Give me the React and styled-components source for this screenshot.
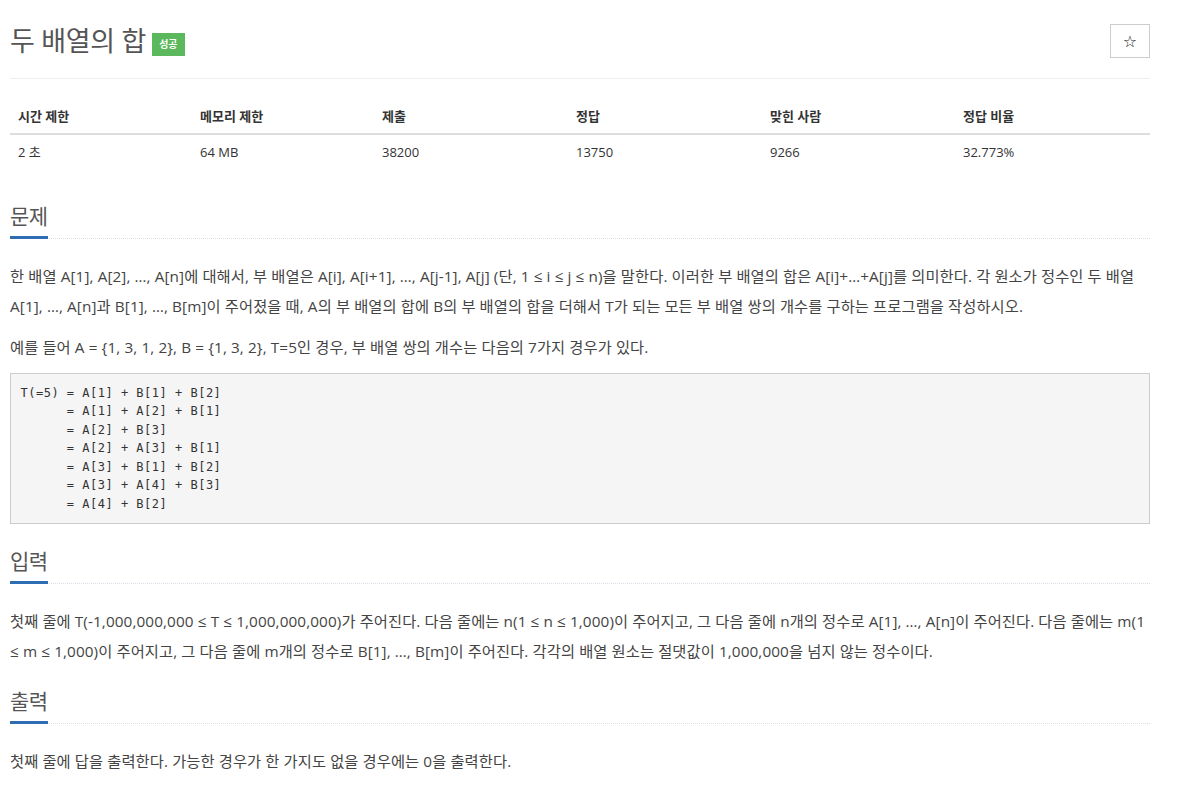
import React from "react";
import styled, { createGlobalStyle } from "styled-components";

const Global = createGlobalStyle`
  html, body { margin: 0; padding: 0; background: #fff; }
  body {
    font-family: "Open Sans", "Noto Sans CJK KR", sans-serif;
    color: #555;
  }
  * { box-sizing: border-box; }
`;

const Page = styled.div`
  width: 1140px;
  margin-left: 10px;
  padding-top: 24px;
`;

const Header = styled.div`
  display: flex;
  align-items: flex-start;
  justify-content: space-between;
  border-bottom: 1px solid #eee;
  padding-bottom: 20px;
  margin-bottom: 20px;
`;

const Title = styled.h1`
  margin: 2px 0 0;
  font-size: 27px;
  font-weight: 400;
  line-height: 30px;
  color: #555;
  letter-spacing: -0.3px;
  display: flex;
  align-items: center;
  gap: 6px;
`;

const Badge = styled.span`
  display: inline-block;
  background: #5cb85c;
  color: #fff;
  font-size: 10px;
  font-weight: 700;
  line-height: 23px;
  height: 23px;
  padding: 0 7px;
  margin-top: 6px;
  letter-spacing: 0;
`;

const StarButton = styled.button`
  width: 40px;
  height: 34px;
  background: #fff;
  border: 1px solid #ccc;
  color: #222;
  font-size: 16px;
  padding: 0;
  cursor: pointer;
  font-family: "DejaVu Sans", sans-serif;
`;

const Table = styled.table`
  width: 100%;
  border-collapse: collapse;
  font-size: 13px;
  margin-bottom: 23px;
  color: #333;
`;

const Th = styled.th`
  text-align: left;
  font-weight: 700;
  padding: 8px;
  line-height: 18px;
  border-bottom: 2px solid #ddd;
`;

const Td = styled.td`
  padding: 8px;
  line-height: 18px;
`;

const Section = styled.section`
  display: flow-root;
`;

const Headline = styled.div`
  border-bottom: 1px dotted #d8dee6;
  margin: 10px 0 22px;
`;

const H2 = styled.h2`
  display: inline-block;
  margin: 0 0 -1px;
  padding-bottom: 6px;
  font-size: 21px;
  font-weight: 400;
  line-height: 28px;
  color: #555;
  letter-spacing: -0.5px;
  border-bottom: 3px solid #2e6db4;
`;

const Para = styled.p`
  margin: 0 0 11px;
  font-size: 15.3px;
  line-height: 30px;
  color: #444;
  letter-spacing: 0.1px;
`;

const Pre = styled.pre`
  margin: 0 0 13px;
  padding: 9.5px;
  background: #f5f5f5;
  border: 1px solid #ccc;
  font-family: "DejaVu Sans Mono", monospace;
  font-size: 12px;
  line-height: 18.57px;
  color: #333;
  letter-spacing: 0.5px;
`;

const cols = [182, 182, 194, 194, 193, 195];
const heads = ["시간 제한", "메모리 제한", "제출", "정답", "맞힌 사람", "정답 비율"];
const vals = ["2 초", "64 MB", "38200", "13750", "9266", "32.773%"];

const code = `T(=5) = A[1] + B[1] + B[2]
      = A[1] + A[2] + B[1]
      = A[2] + B[3]
      = A[2] + A[3] + B[1]
      = A[3] + B[1] + B[2]
      = A[3] + A[4] + B[3]
      = A[4] + B[2]`;

export default function App() {
  return (
    <>
      <Global />
      <Page>
        <Header>
          <Title>
            두 배열의 합 <Badge>성공</Badge>
          </Title>
          <StarButton>☆</StarButton>
        </Header>
        <Table>
          <colgroup>
            {cols.map((w, i) => (
              <col key={i} style={{ width: w }} />
            ))}
          </colgroup>
          <thead>
            <tr>
              {heads.map((h) => (
                <Th key={h}>{h}</Th>
              ))}
            </tr>
          </thead>
          <tbody>
            <tr>
              {vals.map((v) => (
                <Td key={v}>{v}</Td>
              ))}
            </tr>
          </tbody>
        </Table>
        <Section>
          <Headline>
            <H2>문제</H2>
          </Headline>
          <Para>
            한 배열 A[1], A[2], …, A[n]에 대해서, 부 배열은 A[i], A[i+1], …, A[j-1], A[j] (단, 1 ≤ i ≤ j ≤ n)을 말한다. 이러한 부 배열의 합은 A[i]+…+A[j]를 의미한다. 각 원소가 정수인 두 배열 A[1], …, A[n]과 B[1], …, B[m]이 주어졌을 때, A의 부 배열의 합에 B의 부 배열의 합을 더해서 T가 되는 모든 부 배열 쌍의 개수를 구하는 프로그램을 작성하시오.
          </Para>
          <Para>예를 들어 A = {"{"}1, 3, 1, 2{"}"}, B = {"{"}1, 3, 2{"}"}, T=5인 경우, 부 배열 쌍의 개수는 다음의 7가지 경우가 있다.</Para>
          <Pre>{code}</Pre>
        </Section>
        <Section>
          <Headline>
            <H2>입력</H2>
          </Headline>
          <Para>
            첫째 줄에 T(-1,000,000,000 ≤ T ≤ 1,000,000,000)가 주어진다. 다음 줄에는 n(1 ≤ n ≤ 1,000)이 주어지고, 그 다음 줄에 n개의 정수로 A[1], …, A[n]이 주어진다. 다음 줄에는 m(1 ≤ m ≤ 1,000)이 주어지고, 그 다음 줄에 m개의 정수로 B[1], …, B[m]이 주어진다. 각각의 배열 원소는 절댓값이 1,000,000을 넘지 않는 정수이다.
          </Para>
        </Section>
        <Section>
          <Headline>
            <H2>출력</H2>
          </Headline>
          <Para>첫째 줄에 답을 출력한다. 가능한 경우가 한 가지도 없을 경우에는 0을 출력한다.</Para>
        </Section>
      </Page>
    </>
  );
}
